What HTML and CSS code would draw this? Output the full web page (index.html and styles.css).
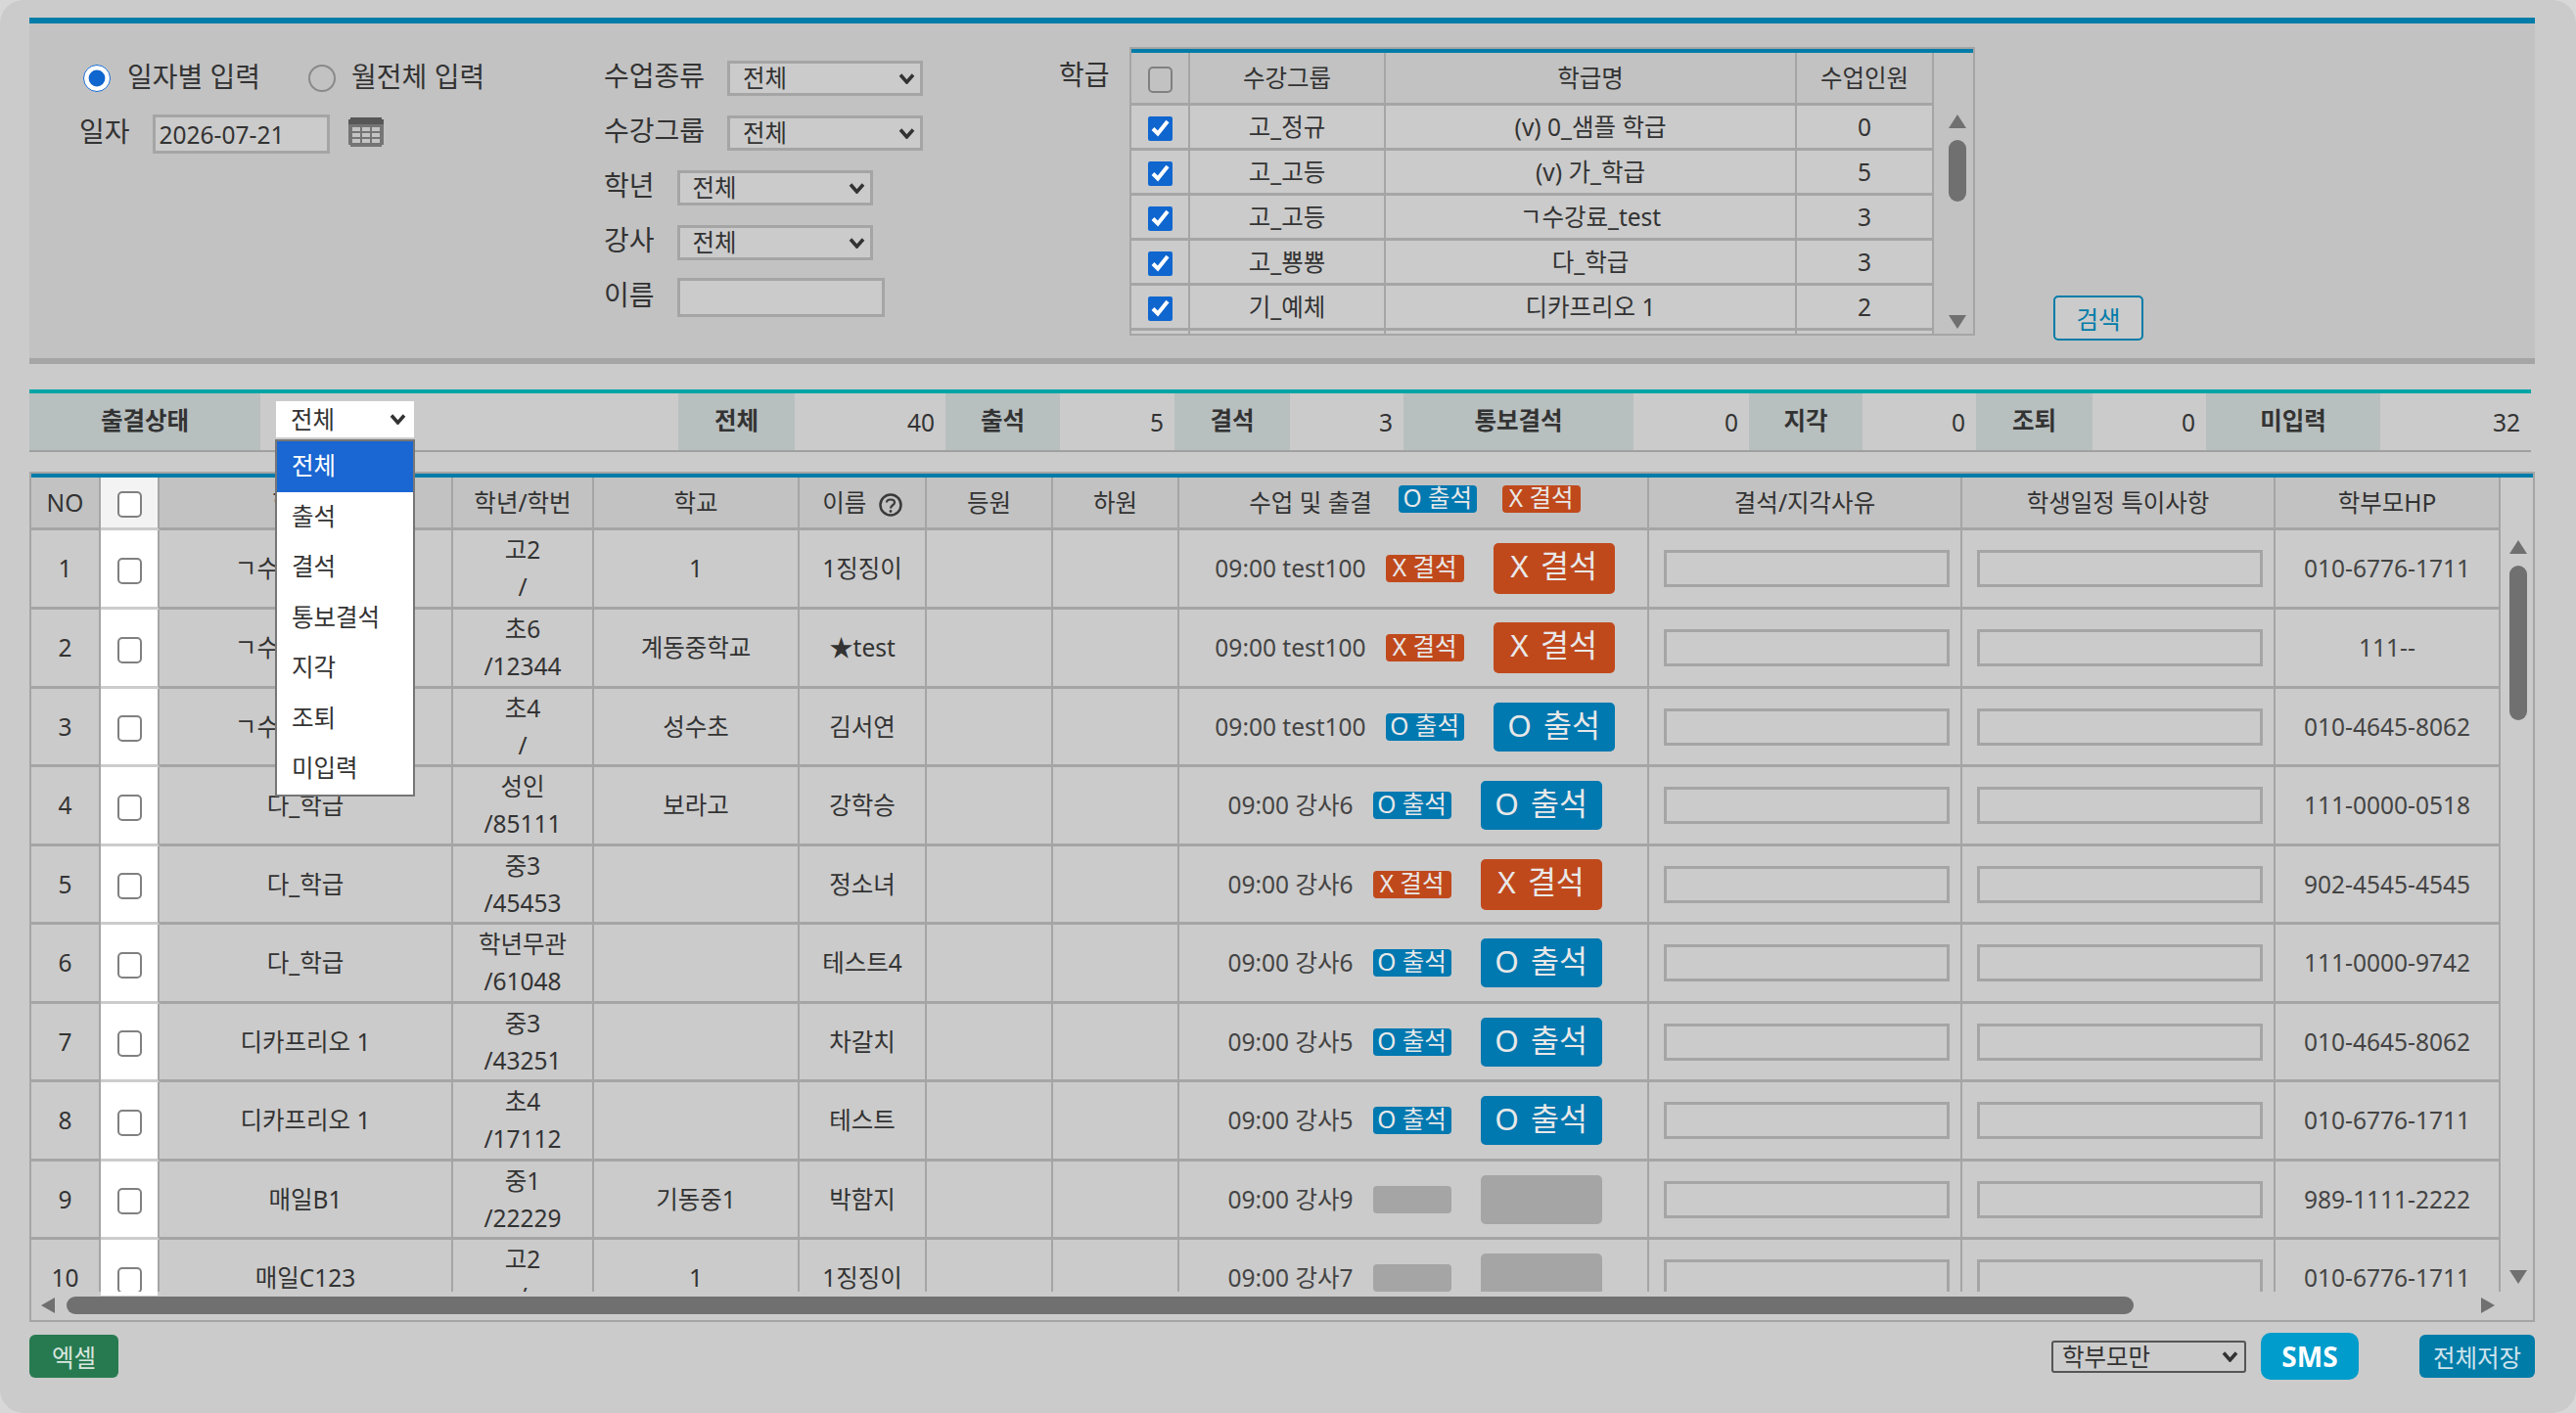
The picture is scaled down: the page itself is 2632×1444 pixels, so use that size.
FILE: index.html
```html
<!DOCTYPE html>
<html lang="ko">
  <head>
    <meta charset="UTF-8" />
    <title>출결 입력</title>
    <link rel="stylesheet" href="styles.css">
  </head>
  <body>
    <div class="page">
      <!-- search -->
      <section class="search">
        <div class="search__date">
          <div class="radios">
            <input class="radio-on" type="radio" name="mode" checked>
            <label class="radios__text">일자별 입력</label>
            <input class="radio-off" type="radio" name="mode">
            <label class="radios__text">월전체 입력</label>
          </div>
          <div class="date-row">
            <span class="label">일자</span>
            <input class="text-input text-input--date" type="text" value="2026-07-21">
            <svg class="cal-icon" width="36" height="30" viewBox="0 0 36 30">
              <rect x="2" y="0" width="32" height="30" fill="#757575" />
              <rect x="0" y="2" width="36" height="26" fill="#757575" />
              <rect x="0" y="2" width="36" height="5" fill="#575757" />
              <rect x="2" y="0" width="32" height="3" fill="#575757" />
              <g fill="#c4c4c4">
                <rect x="4" y="10" width="8" height="4" /><rect x="14" y="10" width="8" height="4" /><rect x="24" y="10" width="8" height="4" />
                <rect x="4" y="16" width="8" height="4" /><rect x="14" y="16" width="8" height="4" /><rect x="24" y="16" width="8" height="4" />
                <rect x="4" y="22" width="8" height="4" /><rect x="14" y="22" width="8" height="4" /><rect x="24" y="22" width="8" height="4" />
              </g>
            </svg>
          </div>
        </div>

        <div class="search__filters">
          <div class="filter">
            <span class="label">수업종류</span>
            <div class="sel"><select><option>전체</option></select><svg class="sel__arrow" width="17" height="11" viewBox="0 0 17 11"><path d="M2 1.5 L8.5 9 L15 1.5" fill="none" stroke="#333" stroke-width="3.5" /></svg></div>
          </div>
          <div class="filter">
            <span class="label">수강그룹</span>
            <div class="sel"><select><option>전체</option></select><svg class="sel__arrow" width="17" height="11" viewBox="0 0 17 11"><path d="M2 1.5 L8.5 9 L15 1.5" fill="none" stroke="#333" stroke-width="3.5" /></svg></div>
          </div>
          <div class="filter">
            <span class="label">학년</span>
            <div class="sel"><select><option>전체</option></select><svg class="sel__arrow" width="17" height="11" viewBox="0 0 17 11"><path d="M2 1.5 L8.5 9 L15 1.5" fill="none" stroke="#333" stroke-width="3.5" /></svg></div>
          </div>
          <div class="filter">
            <span class="label">강사</span>
            <div class="sel"><select><option>전체</option></select><svg class="sel__arrow" width="17" height="11" viewBox="0 0 17 11"><path d="M2 1.5 L8.5 9 L15 1.5" fill="none" stroke="#333" stroke-width="3.5" /></svg></div>
          </div>
          <div class="filter filter--name">
            <span class="label">이름</span>
            <input class="text-input text-input--name" type="text">
          </div>
        </div>

        <div class="search__class">
          <span class="label">학급</span>
          <div class="class-box">
            <table class="class-table">
              <colgroup><col class="cc1"><col class="cc2"><col class="cc3"><col class="cc4"></colgroup>
              <tr class="class-table__head">
                <th><input class="chk" type="checkbox"></th><th>수강그룹</th><th>학급명</th><th>수업인원</th>
              </tr>
              <tr><td><input class="chk-on" type="checkbox" checked></td><td>고_정규</td><td>(v) 0_샘플 학급</td><td>0</td></tr>
              <tr><td><input class="chk-on" type="checkbox" checked></td><td>고_고등</td><td>(v) 가_학급</td><td>5</td></tr>
              <tr><td><input class="chk-on" type="checkbox" checked></td><td>고_고등</td><td>ㄱ수강료_test</td><td>3</td></tr>
              <tr><td><input class="chk-on" type="checkbox" checked></td><td>고_뿅뿅</td><td>다_학급</td><td>3</td></tr>
              <tr><td><input class="chk-on" type="checkbox" checked></td><td>기_예체</td><td>디카프리오 1</td><td>2</td></tr>
              <tr><td></td><td></td><td></td><td></td></tr>
            </table>
            <div class="vbar vbar--class">
              <i class="arrow arrow--up"></i>
              <i class="vbar__thumb"></i>
              <i class="arrow arrow--down"></i>
            </div>
          </div>
        </div>

        <button class="btn-search">검색</button>
      </section>

      <!-- summary -->
      <section class="summary">
        <div class="summary__label">출결상태</div>
        <div class="summary__status">
          <div class="sel sel--white"><select><option>전체</option></select><svg class="sel__arrow" width="17" height="11" viewBox="0 0 17 11"><path d="M2 1.5 L8.5 9 L15 1.5" fill="none" stroke="#333" stroke-width="3.5" /></svg>
            <ul class="menu">
              <li class="menu__item menu__item--active">전체</li>
              <li class="menu__item">출석</li>
              <li class="menu__item">결석</li>
              <li class="menu__item">통보결석</li>
              <li class="menu__item">지각</li>
              <li class="menu__item">조퇴</li>
              <li class="menu__item">미입력</li>
            </ul>
          </div>
        </div>
        <div class="summary__label">전체</div><div class="summary__value">40</div>
        <div class="summary__label">출석</div><div class="summary__value">5</div>
        <div class="summary__label">결석</div><div class="summary__value">3</div>
        <div class="summary__label">통보결석</div><div class="summary__value">0</div>
        <div class="summary__label">지각</div><div class="summary__value">0</div>
        <div class="summary__label">조퇴</div><div class="summary__value">0</div>
        <div class="summary__label">미입력</div><div class="summary__value">32</div>
      </section>

      <!-- list -->
      <section class="list">
        <div class="list__body">
          <table class="grid">
            <colgroup>
              <col class="g1"><col class="g2"><col class="g3"><col class="g4"><col class="g5"><col class="g6">
              <col class="g7"><col class="g8"><col class="g9"><col class="g10"><col class="g11"><col class="g12">
            </colgroup>
            <thead>
              <tr>
                <th>NO</th>
                <th class="check-cell check-cell--head"><input class="chk" type="checkbox"></th>
                <th>학급명</th>
                <th>학년/학번</th>
                <th>학교</th>
                <th>이름 <svg class="help" width="24" height="24" viewBox="0 0 24 24"><circle cx="12" cy="12" r="10.5" fill="none" stroke="#3a3a3a" stroke-width="2.5" /><path d="M8 9.5 C8 5.5 16 5.5 16 9.5 C16 12.5 12 12 12 15.5" fill="none" stroke="#3a3a3a" stroke-width="2.2" /><circle cx="12" cy="18.5" r="1.4" fill="#3a3a3a" /></svg></th>
                <th>등원</th>
                <th>하원</th>
                <th>
                  <div class="att att--head">
                    <span>수업 및 출결</span>
                    <span class="tag tag--on">O 출석</span>
                    <span class="tag tag--off">X 결석</span>
                  </div>
                </th>
                <th>결석/지각사유</th>
                <th>학생일정 특이사항</th>
                <th>학부모HP</th>
              </tr>
            </thead>
            <tbody>
              <tr>
                <td>1</td><td class="check-cell"><input class="chk" type="checkbox"></td><td>ㄱ수강료_test</td><td>고2<br>/</td><td>1</td><td>1징징이</td><td></td><td></td>
                <td><div class="att"><span class="att__time">09:00 test100</span><span class="tag tag--off">X 결석</span><span class="mark mark--off">X 결석</span></div></td>
                <td class="memo"><input class="text-input text-input--cell" type="text"></td><td class="memo"><input class="text-input text-input--cell" type="text"></td><td class="phone">010-6776-1711</td>
              </tr>
              <tr>
                <td>2</td><td class="check-cell"><input class="chk" type="checkbox"></td><td>ㄱ수강료_test</td><td>초6<br>/12344</td><td>계동중학교</td><td>★test</td><td></td><td></td>
                <td><div class="att"><span class="att__time">09:00 test100</span><span class="tag tag--off">X 결석</span><span class="mark mark--off">X 결석</span></div></td>
                <td class="memo"><input class="text-input text-input--cell" type="text"></td><td class="memo"><input class="text-input text-input--cell" type="text"></td><td class="phone">111--</td>
              </tr>
              <tr>
                <td>3</td><td class="check-cell"><input class="chk" type="checkbox"></td><td>ㄱ수강료_test</td><td>초4<br>/</td><td>성수초</td><td>김서연</td><td></td><td></td>
                <td><div class="att"><span class="att__time">09:00 test100</span><span class="tag tag--on">O 출석</span><span class="mark mark--on">O 출석</span></div></td>
                <td class="memo"><input class="text-input text-input--cell" type="text"></td><td class="memo"><input class="text-input text-input--cell" type="text"></td><td class="phone">010-4645-8062</td>
              </tr>
              <tr>
                <td>4</td><td class="check-cell"><input class="chk" type="checkbox"></td><td>다_학급</td><td>성인<br>/85111</td><td>보라고</td><td>강학승</td><td></td><td></td>
                <td><div class="att"><span class="att__time">09:00 강사6</span><span class="tag tag--on">O 출석</span><span class="mark mark--on">O 출석</span></div></td>
                <td class="memo"><input class="text-input text-input--cell" type="text"></td><td class="memo"><input class="text-input text-input--cell" type="text"></td><td class="phone">111-0000-0518</td>
              </tr>
              <tr>
                <td>5</td><td class="check-cell"><input class="chk" type="checkbox"></td><td>다_학급</td><td>중3<br>/45453</td><td></td><td>정소녀</td><td></td><td></td>
                <td><div class="att"><span class="att__time">09:00 강사6</span><span class="tag tag--off">X 결석</span><span class="mark mark--off">X 결석</span></div></td>
                <td class="memo"><input class="text-input text-input--cell" type="text"></td><td class="memo"><input class="text-input text-input--cell" type="text"></td><td class="phone">902-4545-4545</td>
              </tr>
              <tr>
                <td>6</td><td class="check-cell"><input class="chk" type="checkbox"></td><td>다_학급</td><td>학년무관<br>/61048</td><td></td><td>테스트4</td><td></td><td></td>
                <td><div class="att"><span class="att__time">09:00 강사6</span><span class="tag tag--on">O 출석</span><span class="mark mark--on">O 출석</span></div></td>
                <td class="memo"><input class="text-input text-input--cell" type="text"></td><td class="memo"><input class="text-input text-input--cell" type="text"></td><td class="phone">111-0000-9742</td>
              </tr>
              <tr>
                <td>7</td><td class="check-cell"><input class="chk" type="checkbox"></td><td>디카프리오 1</td><td>중3<br>/43251</td><td></td><td>차갈치</td><td></td><td></td>
                <td><div class="att"><span class="att__time">09:00 강사5</span><span class="tag tag--on">O 출석</span><span class="mark mark--on">O 출석</span></div></td>
                <td class="memo"><input class="text-input text-input--cell" type="text"></td><td class="memo"><input class="text-input text-input--cell" type="text"></td><td class="phone">010-4645-8062</td>
              </tr>
              <tr>
                <td>8</td><td class="check-cell"><input class="chk" type="checkbox"></td><td>디카프리오 1</td><td>초4<br>/17112</td><td></td><td>테스트</td><td></td><td></td>
                <td><div class="att"><span class="att__time">09:00 강사5</span><span class="tag tag--on">O 출석</span><span class="mark mark--on">O 출석</span></div></td>
                <td class="memo"><input class="text-input text-input--cell" type="text"></td><td class="memo"><input class="text-input text-input--cell" type="text"></td><td class="phone">010-6776-1711</td>
              </tr>
              <tr>
                <td>9</td><td class="check-cell"><input class="chk" type="checkbox"></td><td>매일B1</td><td>중1<br>/22229</td><td>기동중1</td><td>박함지</td><td></td><td></td>
                <td><div class="att"><span class="att__time">09:00 강사9</span><span class="tag tag--none"></span><span class="mark mark--none"></span></div></td>
                <td class="memo"><input class="text-input text-input--cell" type="text"></td><td class="memo"><input class="text-input text-input--cell" type="text"></td><td class="phone">989-1111-2222</td>
              </tr>
              <tr>
                <td>10</td><td class="check-cell"><input class="chk" type="checkbox"></td><td>매일C123</td><td>고2<br>/</td><td>1</td><td>1징징이</td><td></td><td></td>
                <td><div class="att"><span class="att__time">09:00 강사7</span><span class="tag tag--none"></span><span class="mark mark--none"></span></div></td>
                <td class="memo"><input class="text-input text-input--cell" type="text"></td><td class="memo"><input class="text-input text-input--cell" type="text"></td><td class="phone">010-6776-1711</td>
              </tr>
            </tbody>
          </table>
          <div class="vbar vbar--list">
            <i class="arrow arrow--up"></i>
            <i class="vbar__thumb vbar__thumb--list"></i>
            <i class="arrow arrow--down"></i>
          </div>
        </div>
        <div class="hbar">
          <i class="arrow arrow--left"></i>
          <i class="hbar__thumb"></i>
          <i class="arrow arrow--right"></i>
        </div>
      </section>

      <!-- footer -->
      <footer class="footer">
        <button class="btn btn--excel">엑셀</button>
        <div class="sel sel--footer"><select><option>학부모만</option></select><svg class="sel__arrow" width="17" height="11" viewBox="0 0 17 11"><path d="M2 1.5 L8.5 9 L15 1.5" fill="none" stroke="#333" stroke-width="3.5" /></svg></div>
        <button class="btn btn--sms">SMS</button>
        <button class="btn btn--save">전체저장</button>
      </footer>
    </div>
  </body>
</html>
```

FILE: styles.css
```css
* {
  margin: 0;
  padding: 0;
  box-sizing: border-box;
}

body {
  background-color: #d8d8d8;
  font-family: "Noto Sans", "Noto Sans CJK KR", sans-serif;
  font-size: 24.5px;
  color: #333;
}

.page {
  width: 2632px;
  height: 1444px;
  padding: 18px 42px 0 30px;
  background-color: #cbcbcb;
  border-radius: 24px;
  overflow: hidden;
}

.label {
  font-size: 28px;
  line-height: 36px;
  margin-bottom: 6px;
  color: #333;
}

/* form controls */
.text-input {
  border: 3px solid #a5a5a5;
  background-color: #cbcbcb;
  font: inherit;
  color: #333;
}

.text-input--date {
  width: 181px;
  height: 40px;
  padding-left: 4px;
}

.text-input--name {
  width: 212px;
  height: 40px;
}

.text-input--cell {
  display: block;
  width: 292px;
  height: 38px;
  margin: 0 auto;
}

.sel {
  position: relative;
  width: 200px;
  height: 36px;
}

.sel select {
  appearance: none;
  display: block;
  width: 100%;
  height: 100%;
  padding-left: 13px;
  border: 3px solid #a5a5a5;
  background-color: #cbcbcb;
  font: inherit;
  line-height: 30px;
  color: #333;
}

.sel__arrow {
  position: absolute;
  top: 13px;
  right: 8px;
  pointer-events: none;
}

.sel--white {
  width: 141px;
  height: 37px;
}

.sel--white select {
  border: none;
  background-color: #fff;
  padding-left: 15px;
}

.sel--footer {
  width: 199px;
  height: 33px;
}

.sel--footer select {
  border: 2px solid #555;
  border-radius: 3px;
  padding-left: 9px;
}

.sel--footer .sel__arrow {
  top: 11px;
}

.chk {
  appearance: none;
  display: inline-block;
  width: 25px;
  height: 27px;
  border: 2px solid #808080;
  border-radius: 5px;
  background-color: transparent;
  vertical-align: middle;
}

.check-cell .chk {
  background-color: #fff;
}

.chk-on {
  display: inline-block;
  width: 25px;
  height: 27px;
  accent-color: #0f66cf;
  vertical-align: middle;
}

/* search */
.search {
  display: flex;
  height: 354px;
  border-top: 6px solid #007ca8;
  border-bottom: 6px solid #a5a5a5;
  background-color: #c2c2c2;
  padding-left: 51px;
}

.search__date {
  width: 536px;
  padding-top: 38px;
}

.radios {
  display: flex;
  align-items: center;
  height: 36px;
  padding-left: 4px;
}

.radios__text {
  font-size: 28px;
  margin-left: 17px;
  margin-right: 49px;
  margin-bottom: 6px;
}

.radio-on,
.radio-off {
  width: 28px;
  height: 28px;
  accent-color: #0f66cf;
}

.radio-off {
  appearance: none;
  border: 2px solid #8a8a8a;
  border-radius: 50%;
}

.radio-off + .radios__text {
  margin-left: 16px;
}

.date-row {
  display: flex;
  align-items: center;
  gap: 23px;
  margin-top: 18px;
}

.cal-icon {
  margin-left: -4px;
  margin-bottom: 4px;
}

.search__filters {
  width: 465px;
  padding-top: 38px;
}

.filter {
  display: flex;
  align-items: center;
  gap: 23px;
  height: 36px;
  margin-bottom: 20px;
}

.filter--name {
  height: 40px;
  margin-top: -2px;
}

.search__class {
  display: flex;
  align-items: flex-start;
  padding-top: 24px;
  width: 936px;
}

.search__class .label {
  width: 72px;
  margin-top: 10px;
}

.class-box {
  display: flex;
  width: 864px;
  height: 295px;
  border: 2px solid #a5a5a5;
  overflow: hidden;
}

.class-table {
  table-layout: fixed;
  width: 820px;
  height: fit-content;
  border-collapse: separate;
  border-spacing: 0;
  background-color: #cbcbcb;
  border-top: 4px solid #007ca8;
}

.cc1 { width: 60px; }
.cc2 { width: 200px; }
.cc3 { width: 420px; }
.cc4 { width: 140px; }

.class-table th,
.class-table td {
  height: 46px;
  border-right: 2px solid #a5a5a5;
  border-bottom: 3px solid #a5a5a5;
  text-align: center;
  font-weight: 400;
  line-height: 30px;
}

.class-table__head th {
  height: 54px;
  background-color: #c2c2c2;
}

.vbar {
  display: flex;
  flex-direction: column;
  align-items: center;
  flex: 1;
}

.vbar--class {
  padding: 63px 0 5px 7px;
  border-top: 4px solid #007ca8;
}

.vbar__thumb {
  display: block;
  width: 18px;
  height: 63px;
  margin-top: 12px;
  margin-bottom: auto;
  background-color: #707070;
  border-radius: 9px;
}

.vbar__thumb--list {
  height: 158px;
}

.arrow {
  display: block;
  width: 0;
  height: 0;
  border-style: solid;
  border-color: transparent;
}

.arrow--up {
  border-width: 0 9px 14px;
  border-bottom-color: #707070;
}

.arrow--down {
  border-width: 14px 9px 0;
  border-top-color: #707070;
}

.arrow--left {
  border-width: 8px 14px 8px 0;
  border-right-color: #707070;
}

.arrow--right {
  border-width: 8px 0 8px 14px;
  border-left-color: #707070;
}

.btn-search {
  align-self: flex-end;
  width: 92px;
  height: 46px;
  margin-bottom: 18px;
  margin-left: 80px;
  border: 2px solid #007ca8;
  border-radius: 5px;
  background-color: #cbcbcb;
  color: #007ca8;
  font: inherit;
}

/* summary */
.summary {
  display: grid;
  grid-template-columns: 236px 427px 119px 154px 117px 117px 118px 116px 235px 118px 116px 116px 119px 116px 178px 154px;
  width: 2556px;
  height: 64px;
  margin-top: 26px;
  border-top: 4px solid #00a5a5;
  border-bottom: 2px solid #a0a0a0;
}

.summary__label {
  display: flex;
  align-items: center;
  justify-content: center;
  padding-bottom: 6px;
  background-color: #b8bfbf;
  font-weight: 700;
  color: #333;
}

.summary__status {
  padding: 8px 0 0 16px;
}

.summary__value {
  padding: 13px 11px 0 0;
  text-align: right;
}

.menu {
  position: absolute;
  top: 39px;
  left: -1px;
  z-index: 5;
  width: 143px;
  border: 2px solid #767676;
  background-color: #fff;
  list-style: none;
}

.menu__item {
  height: 51.5px;
  padding-left: 15px;
  line-height: 50px;
  color: #333;
}

.menu__item--active {
  background-color: #1a66d2;
  color: #fff;
}

/* list */
.list {
  width: 2560px;
  height: 869px;
  margin-top: 20px;
  border: 2px solid #a5a5a5;
}

.list__body {
  display: flex;
  height: 836px;
  border-top: 4px solid #007ca8;
  overflow: hidden;
}

.grid {
  table-layout: fixed;
  width: 2523px;
  flex-shrink: 0;
  height: fit-content;
  border-collapse: separate;
  border-spacing: 0;
}

.g1 { width: 71px; }
.g2 { width: 60px; }
.g3 { width: 300px; }
.g4 { width: 144px; }
.g5 { width: 210px; }
.g6 { width: 130px; }
.g7 { width: 129px; }
.g8 { width: 129px; }
.g9 { width: 480px; }
.g10 { width: 320px; }
.g11 { width: 320px; }
.g12 { width: 230px; }

.grid th,
.grid td {
  border-right: 2px solid #a5a5a5;
  border-bottom: 3px solid #a5a5a5;
  text-align: center;
  font-weight: 400;
  line-height: 38px;
}

.grid th {
  height: 54px;
  background-color: #c2c2c2;
}

.grid td {
  height: 80px;
}

.grid tbody tr:nth-child(even) td,
.grid tbody tr:first-child td {
  height: 81px;
}

.grid .memo {
  padding-left: 3px;
}

.grid .check-cell {
  background-color: #fff;
  border-bottom-color: #ccc;
}

.grid .check-cell--head {
  background-color: #f3f3f3;
}

.help {
  margin-left: 6px;
  vertical-align: -5px;
}

.att {
  display: flex;
  align-items: center;
  justify-content: center;
  padding-left: 3px;
}

.att__time {
  margin-right: 20px;
  color: #444;
}

.att--head .tag {
  margin-left: 27px;
  margin-right: 0;
  margin-bottom: 8px;
}

.att--head .tag + .tag {
  margin-left: 26px;
}

.tag {
  width: 80px;
  height: 28px;
  margin-right: 30px;
  border-radius: 4px;
  font-size: 24.5px;
  line-height: 26px;
  color: #e8e8e8;
  text-align: center;
  white-space: nowrap;
}

.tag--on { background-color: #0078b0; }
.tag--off { background-color: #c0491c; }
.tag--none { background-color: #a5a5a5; }

.mark {
  width: 124px;
  height: 50px;
  border-radius: 5px;
  font-size: 31.5px;
  line-height: 46px;
  word-spacing: 4px;
  color: #e8e8e8;
  text-align: center;
  white-space: nowrap;
}

.mark--on { background-color: #0078b0; }
.mark--off { height: 52px; background-color: #c0491c; }
.mark--none { background-color: #a5a5a5; }

.phone {
  color: #444;
}

.vbar--list {
  padding: 64px 0 8px 3px;
}

.hbar {
  position: relative;
  display: flex;
  align-items: center;
  height: 29px;
  padding: 0 39px 2px 10px;
}

/* the checkbox column runs a little past the clipped rows */
.hbar::before {
  content: "";
  position: absolute;
  top: 0;
  left: 71px;
  width: 58px;
  height: 4px;
  background-color: #fff;
}

.hbar__thumb {
  display: block;
  width: 2112px;
  height: 18px;
  margin-left: 12px;
  margin-right: auto;
  background-color: #707070;
  border-radius: 9px;
}

/* footer */
.footer {
  display: flex;
  align-items: center;
  height: 48px;
  margin-top: 11px;
}

.btn {
  border: none;
  font: inherit;
}

.btn--excel {
  width: 91px;
  height: 44px;
  margin-right: auto;
  border-radius: 6px;
  background-color: #277a50;
  color: #d8e6df;
}

.btn--sms {
  width: 100px;
  height: 48px;
  margin-left: 15px;
  border-radius: 10px;
  background-color: #009ccc;
  color: #fff;
  font-size: 28px;
  font-weight: 700;
}

.btn--save {
  width: 118px;
  height: 44px;
  margin-left: 62px;
  border-radius: 6px;
  background-color: #007ca8;
  color: #cfe3ec;
}
```
